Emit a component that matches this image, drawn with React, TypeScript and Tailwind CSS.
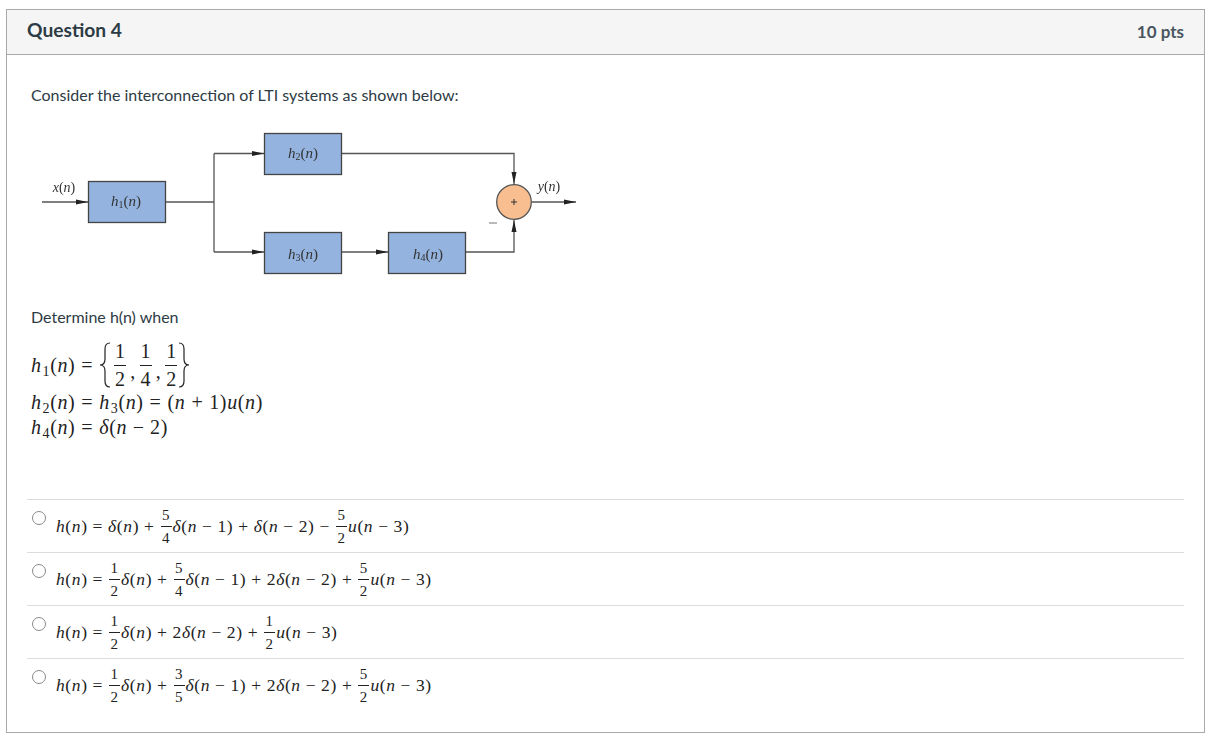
import React from "react";

const I = ({ children }: { children: React.ReactNode }) => <span className="italic">{children}</span>;
const Sub = ({ children }: { children: React.ReactNode }) => (
  <span className="relative top-[4px] ml-[1px] text-[14px] leading-none">{children}</span>
);
const Op = ({ children }: { children: React.ReactNode }) => <span className="mx-[5px]">{children}</span>;
const BigOp = ({ children }: { children: React.ReactNode }) => <span className="mx-[6px]">{children}</span>;

const Frac = ({ n, d, big }: { n: string; d: string; big?: boolean }) =>
  big ? (
    <span className="mx-[1px] inline-flex w-[12px] flex-col items-center text-[20px] leading-[27px]">
      <span className="h-[27px]">{n}</span>
      <span className="h-[1px] w-full bg-[#222]" />
      <span className="h-[27px]">{d}</span>
    </span>
  ) : (
    <span className="mx-[1px] inline-flex w-[11px] flex-col items-center text-[15px] leading-[22px]">
      <span className="h-[22px]">{n}</span>
      <span className="h-[1px] w-full bg-[#222]" />
      <span className="h-[22px]">{d}</span>
    </span>
  );

const Brace = ({ right }: { right?: boolean }) => (
  <svg width="12" height="46" viewBox="0 0 12 46" className={right ? "-scale-x-100" : ""} fill="none" stroke="#222" strokeWidth="1.2">
    <path d="M11 1C7 1 6 3 6 7V17C6 21 4 23 1 23C4 23 6 25 6 29V39C6 43 7 45 11 45" />
  </svg>
);

const Opt = ({ children }: { children: React.ReactNode }) => (
  <div className="flex h-[53px] items-start border-t border-[#dcdcdc]">
    <span className="ml-[5px] mt-[11px] h-[14px] w-[14px] shrink-0 rounded-full border border-[#8a8a8a] bg-white" />
    <div className="ml-[10px] mt-[3px] flex h-[46px] items-center whitespace-pre text-[17.5px] tracking-[0.6px] text-[#222] [font-family:'Liberation_Serif',serif]">
      {children}
    </div>
  </div>
);

const H = () => (
  <>
    <I>h</I>(<I>n</I>)<Op>=</Op>
  </>
);

const Diagram = () => (
  <svg width="560" height="160" viewBox="30 125 560 160" className="ml-[-1px] mt-[18px] block blur-[0.35px]">
    <g stroke="#555" strokeWidth="1.3" fill="none">
      <path d="M42 202H88M165 202H214M214 153.5V252M214 153.5H264M214 252H264M342 153.5H514V184M342 252H388M465 252H514V220M532 202H576" />
    </g>
    <g fill="#222">
      <path d="M76 199.5L88 202L76 204.5Z" />
      <path d="M252 151L264 153.5L252 156Z" />
      <path d="M252 249.5L264 252L252 254.5Z" />
      <path d="M376 249.5L388 252L376 254.5Z" />
      <path d="M564 199.5L576 202L564 204.5Z" />
      <path d="M511.5 172L514 184L516.5 172Z" />
      <path d="M511.5 232L514 220L516.5 232Z" />
    </g>
    <g fill="#94b3de" stroke="#444" strokeWidth="1.3">
      <rect x="88.5" y="181.5" width="77" height="41" />
      <rect x="264.5" y="133.5" width="77" height="41" />
      <rect x="264.5" y="232.5" width="77" height="41" />
      <rect x="388.5" y="232.5" width="77" height="41" />
    </g>
    <circle cx="514" cy="202" r="17.3" fill="#f9be90" stroke="#555" strokeWidth="1.3" />
    <path d="M511 202H517M514 199V205" stroke="#333" strokeWidth="1" />
    <path d="M489 223H497" stroke="#777" strokeWidth="1" />
    <g fontFamily="'Liberation Serif', serif" fontSize="15" fill="#333" textAnchor="middle">
      <text x="64" y="192" fontSize="14"><tspan fontStyle="italic">x</tspan>(<tspan fontStyle="italic">n</tspan>)</text>
      <text x="126" y="206"><tspan fontStyle="italic">h</tspan><tspan fontSize="10" dy="2">1</tspan><tspan dy="-2">(</tspan><tspan fontStyle="italic">n</tspan>)</text>
      <text x="303" y="158"><tspan fontStyle="italic">h</tspan><tspan fontSize="10" dy="2">2</tspan><tspan dy="-2">(</tspan><tspan fontStyle="italic">n</tspan>)</text>
      <text x="303" y="259"><tspan fontStyle="italic">h</tspan><tspan fontSize="10" dy="2">3</tspan><tspan dy="-2">(</tspan><tspan fontStyle="italic">n</tspan>)</text>
      <text x="428" y="259"><tspan fontStyle="italic">h</tspan><tspan fontSize="10" dy="2">4</tspan><tspan dy="-2">(</tspan><tspan fontStyle="italic">n</tspan>)</text>
      <text x="549" y="191" fontSize="14"><tspan fontStyle="italic">y</tspan>(<tspan fontStyle="italic">n</tspan>)</text>
    </g>
  </svg>
);

export default function App() {
  return (
    <div className="px-[6px] pt-[9px] [font-family:Lato,sans-serif]">
      <div className="h-[724px] w-[1199px] border border-[#a9a9a9] bg-white text-[#2d3b45]">
        <div className="flex h-[45px] items-center justify-between border-b border-[#a9a9a9] bg-[#f5f5f5] pl-[20px] pr-[20px]">
          <span className="pb-[4px] text-[19.2px] font-bold leading-[40px]">Question 4</span>
          <span className="text-[17px] font-bold text-[#4a5660]">10 pts</span>
        </div>
        <div className="pl-[24px] pr-[20px]">
          <p className="pt-[28px] text-[16px] leading-[24px]">Consider the interconnection of LTI systems as shown below:</p>
          <Diagram />
          <p className="mt-[20px] text-[16px] leading-[24px]">Determine h(n) when</p>
          <div className="whitespace-pre text-[20px] leading-[25px] tracking-[0.6px] text-[#222] [font-family:'Liberation_Serif',serif]">
            <div className="mt-[13px] flex h-[46px] items-center">
              <span><I>h</I><Sub>1</Sub>(<I>n</I>)<BigOp>=</BigOp></span>
              <Brace />
              <span className="w-[2px]" />
              <Frac big n="1" d="2" />
              <span className="mx-[3px] translate-y-[6px]">,</span>
              <Frac big n="1" d="4" />
              <span className="mx-[3px] translate-y-[6px]">,</span>
              <Frac big n="1" d="2" />
              <Brace right />
            </div>
            <div className="mt-[2px]"><I>h</I><Sub>2</Sub>(<I>n</I>)<BigOp>=</BigOp><I>h</I><Sub>3</Sub>(<I>n</I>)<BigOp>=</BigOp>(<I>n</I><BigOp>+</BigOp>1)<I>u</I>(<I>n</I>)</div>
            <div><I>h</I><Sub>4</Sub>(<I>n</I>)<BigOp>=</BigOp><I>δ</I>(<I>n</I> − 2)</div>
          </div>
          <div className="ml-[-4px] mt-[59px] w-[1157px]">
            <Opt><H /><I>δ</I>(<I>n</I>)<Op>+</Op><Frac n="5" d="4" /><I>δ</I>(<I>n</I> − 1)<Op>+</Op><I>δ</I>(<I>n</I> − 2)<Op>−</Op><Frac n="5" d="2" /><I>u</I>(<I>n</I> − 3)</Opt>
            <Opt><H /><Frac n="1" d="2" /><I>δ</I>(<I>n</I>)<Op>+</Op><Frac n="5" d="4" /><I>δ</I>(<I>n</I> − 1)<Op>+</Op>2<I>δ</I>(<I>n</I> − 2)<Op>+</Op><Frac n="5" d="2" /><I>u</I>(<I>n</I> − 3)</Opt>
            <Opt><H /><Frac n="1" d="2" /><I>δ</I>(<I>n</I>)<Op>+</Op>2<I>δ</I>(<I>n</I> − 2)<Op>+</Op><Frac n="1" d="2" /><I>u</I>(<I>n</I> − 3)</Opt>
            <Opt><H /><Frac n="1" d="2" /><I>δ</I>(<I>n</I>)<Op>+</Op><Frac n="3" d="5" /><I>δ</I>(<I>n</I> − 1)<Op>+</Op>2<I>δ</I>(<I>n</I> − 2)<Op>+</Op><Frac n="5" d="2" /><I>u</I>(<I>n</I> − 3)</Opt>
          </div>
        </div>
      </div>
    </div>
  );
}
